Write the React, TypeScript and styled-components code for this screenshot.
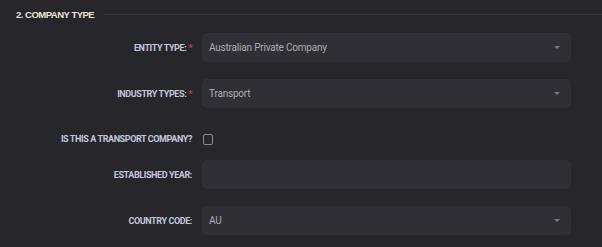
import React from "react";
import styled, { createGlobalStyle } from "styled-components";

const GlobalStyle = createGlobalStyle`
  html, body {
    margin: 0;
    padding: 0;
    background: #27262b;
  }
  body {
    font-family: Roboto, "Liberation Sans", Arial, sans-serif;
  }
`;

type Field = {
  label: string;
  required?: boolean;
  kind: "select" | "text" | "checkbox";
  value?: string;
};

const fields: Field[] = [
  { label: "Entity Type:", required: true, kind: "select", value: "Australian Private Company" },
  { label: "Industry Types:", required: true, kind: "select", value: "Transport" },
  { label: "Is this a transport company?", kind: "checkbox" },
  { label: "Established Year:", kind: "text" },
  { label: "Country Code:", kind: "select", value: "AU" },
];

const App = () => {
  return (
    <>
      <GlobalStyle />
      <Page>
        <SectionHeader>
          <SectionTitle>2. COMPANY TYPE</SectionTitle>
          <HeaderRule />
        </SectionHeader>
        <Form>
          {fields.map((f) => (
            <Row key={f.label} compact={f.kind === "checkbox"}>
              <Label>
                {f.label}
                {f.required && <Required>*</Required>}
              </Label>
              {f.kind === "checkbox" ? (
                <Checkbox />
              ) : (
                <Input>
                  <InputText>{f.value}</InputText>
                  {f.kind === "select" && <Caret />}
                </Input>
              )}
            </Row>
          ))}
        </Form>
      </Page>
    </>
  );
};

export default App;

const Page = styled.div`
  width: 602px;
  height: 247px;
  overflow: hidden;
  background: #27262b;
`;

const SectionHeader = styled.div`
  display: flex;
  align-items: center;
  gap: 10px;
  height: 28px;
  padding-left: 16px;
`;

const SectionTitle = styled.div`
  font-family: "Liberation Sans", Arial, sans-serif;
  font-size: 9.5px;
  font-weight: 700;
  letter-spacing: -0.5px;
  color: #ebe3d3;
  white-space: nowrap;
`;

const HeaderRule = styled.div`
  flex: 1;
  height: 1px;
  background: #3b3a40;
`;

const Form = styled.div`
  display: flex;
  flex-direction: column;
  padding-top: 5px;
`;

const Row = styled.div<{ compact?: boolean }>`
  display: flex;
  align-items: center;
  height: ${(p) => (p.compact ? "14px" : "29px")};
  margin-top: ${(p) => (p.compact ? "7px" : "0")};
  margin-bottom: ${(p) => (p.compact ? "14px" : "17px")};
`;

const Label = styled.div`
  width: 192px;
  text-align: right;
  font-family: Roboto, "Liberation Sans", Arial, sans-serif;
  font-size: 9px;
  font-weight: 700;
  letter-spacing: -0.4px;
  text-transform: uppercase;
  color: #c4c7de;
  white-space: nowrap;
`;

const Required = styled.span`
  color: #e2333d;
  margin-left: 2px;
`;

const Input = styled.div`
  display: flex;
  align-items: center;
  width: 369px;
  height: 29px;
  margin-left: 10px;
  padding: 0 11px 0 7px;
  box-sizing: border-box;
  border-radius: 5px;
  background: #302f35;
`;

const InputText = styled.span`
  flex: 1;
  font-size: 10px;
  letter-spacing: -0.2px;
  color: #aeaeb3;
`;

const Caret = styled.span`
  width: 0;
  height: 0;
  border-left: 3px solid transparent;
  border-right: 3px solid transparent;
  border-top: 3px solid #78787d;
`;

const Checkbox = styled.div`
  width: 10px;
  height: 11px;
  margin-left: 11px;
  box-sizing: border-box;
  border: 1.5px solid #8c8c92;
  border-radius: 2px;
`;
